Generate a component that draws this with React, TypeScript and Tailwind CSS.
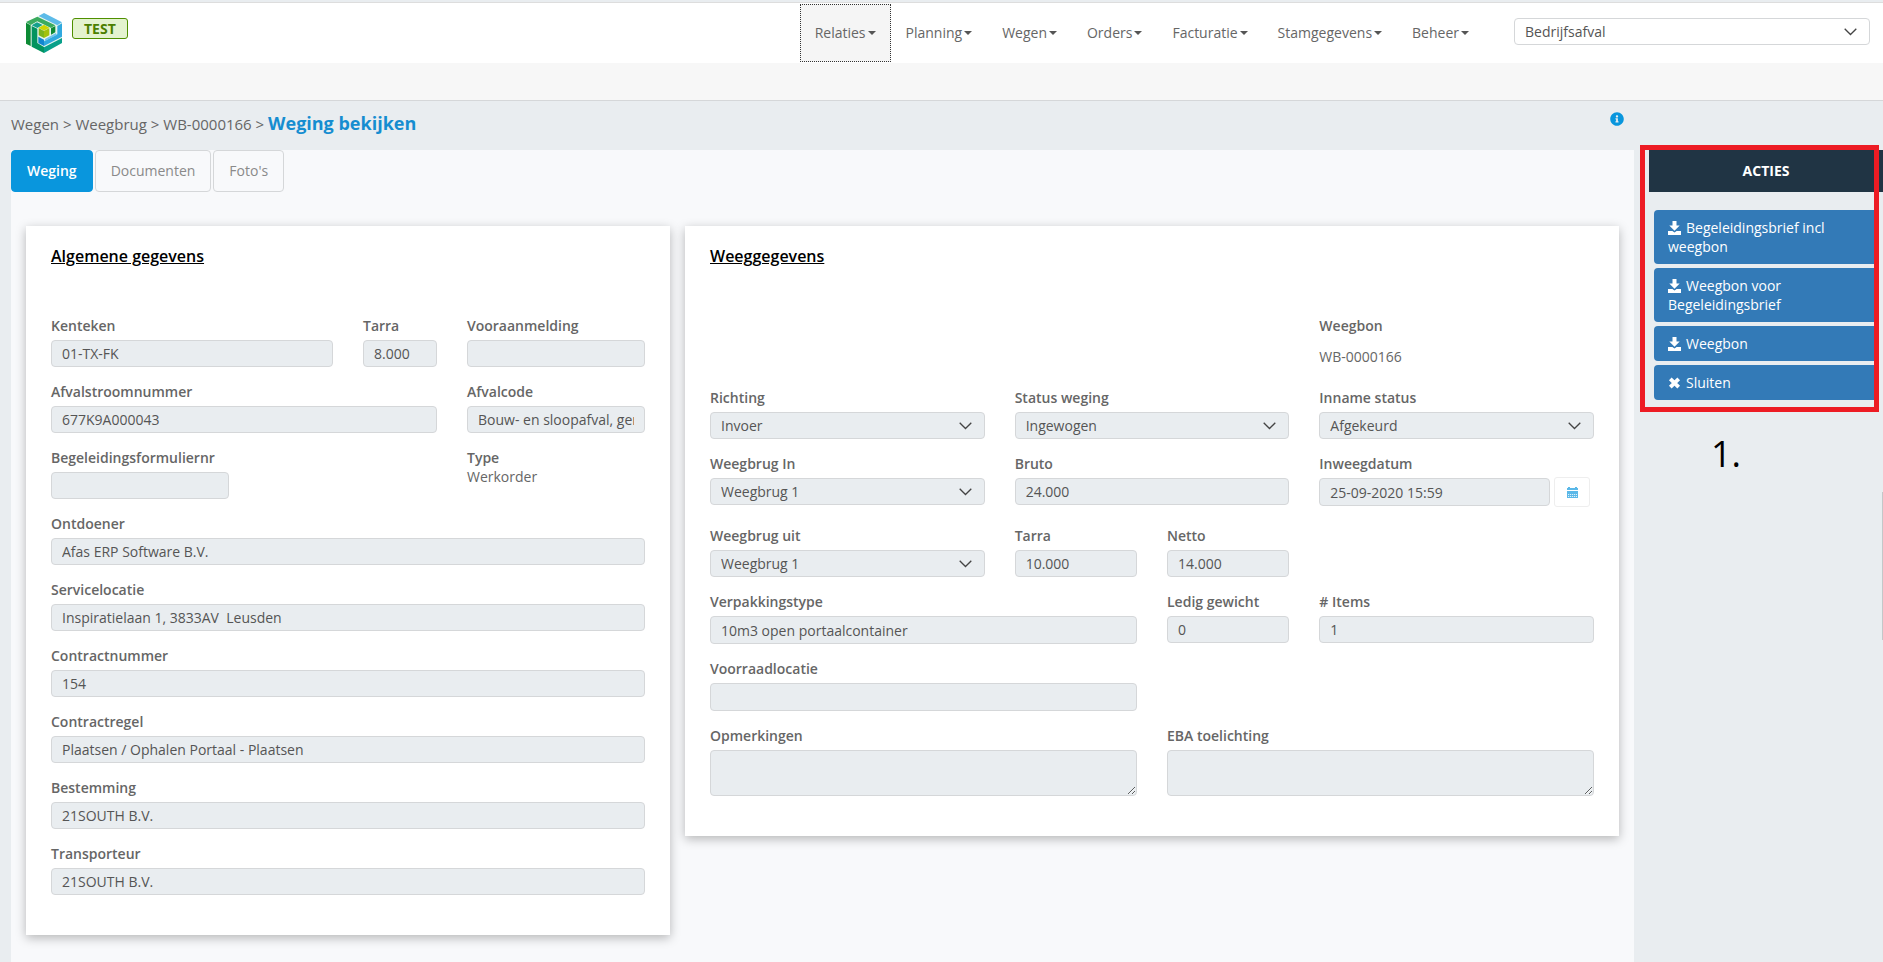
import React, { useState } from 'react';
import { FaInfoCircle } from 'react-icons/fa';

const menuItems = ['Relaties', 'Planning', 'Wegen', 'Orders', 'Facturatie', 'Stamgegevens', 'Beheer'];
const tabs = ['Weging', 'Documenten', "Foto's"];

const inputClass =
  'block w-full rounded border border-[#d5d7d9] bg-[#e9edf0] px-[10px] text-sm text-[#555555] outline-none';

function Logo() {
  return (
    <svg width="36" height="40" viewBox="0 0 108 120" aria-hidden="true">
      <polygon points="54,0 108,29 108,90 54,120 0,92 0,29" fill="#e8f5ee" />
      <polygon points="38,9 54,0 108,28 94,37" fill="#5dbbe9" />
      <polygon points="0,27 34,11 88,37 75,45 34,25 14,36" fill="#3bab5e" />
      <polygon points="0,29 14,37 14,99 0,92" fill="#0d8a35" />
      <polygon points="75,46 88,39 88,58 75,65" fill="#0d8a35" />
      <polygon points="17,37 33,28 50,36 34,45" fill="#14a08c" />
      <polygon points="17,39 34,47 34,90 54,102 54,120 17,101" fill="#02935f" />
      <polygon points="94,39 108,31 108,71 54,99 54,85 94,64" fill="#30a9df" />
      <polygon points="54,103 108,75 108,90 54,120" fill="#08a08a" />
      <polygon points="37,71 54,80 54,99 37,90" fill="#1286cf" />
      <polygon points="57,78 90,60 92,66 56,85" fill="#6fc3ec" />
      <polygon points="54,35 70,44 54,53 38,44" fill="#cdd500" />
      <polygon points="38,45 54,54 54,75 38,67" fill="#7db51c" />
      <polygon points="70,45 54,54 54,75 70,67" fill="#a2c10c" />
    </svg>
  );
}

function DownloadIcon() {
  return (
    <svg className="mr-[5px] inline-block align-[-2px]" width="13" height="14" viewBox="0 0 13 14" fill="currentColor" aria-hidden="true">
      <path d="M4.5 0h4v4.5h3.2L6.5 9.7 1.3 4.5h3.2zM0 10h4.4l2.1 1.4L8.600 10H13v4H0z" />
    </svg>
  );
}

function CloseIcon() {
  return (
    <svg className="mr-[5px] inline-block align-[-1px]" width="13" height="12" viewBox="0 0 13 12" aria-hidden="true">
      <path d="M2.300 1.800l8.400 8.400M10.700 1.800l-8.400 8.400" stroke="currentColor" strokeWidth="3.800" />
    </svg>
  );
}

function CalendarIcon() {
  return (
    <svg width="11" height="11" viewBox="0 0 11 11" aria-hidden="true">
      <path d="M0 1h1V0h2v1h5V0h2v1h1v2H0zM0 4h11v7H0z" fill="#5bb8e8" />
      <path d="M1 7.500h9M1 9.500h9" stroke="#ffffff" strokeWidth="0.800" strokeDasharray="1.200 0.800" />
    </svg>
  );
}

function Select({ id, value }: { id: string; value: string }) {
  return (
    <div className="relative">
      <select id={id} defaultValue={value} className={`${inputClass} h-[27px] appearance-none`}>
        <option>{value}</option>
      </select>
      <Chevron />
    </div>
  );
}

function Chevron() {
  return (
    <svg
      className="pointer-events-none absolute top-[10px] right-[13px]"
      width="13"
      height="8"
      viewBox="0 0 13 8"
      fill="none"
      stroke="#444444"
      strokeWidth="1.300"
      aria-hidden="true"
    >
      <path d="M0.700 0.700l5.800 5.800 5.800-5.800" />
    </svg>
  );
}

interface FieldProps {
  id: string;
  label: string;
  value?: string;
  span: string;
  type?: 'input' | 'select' | 'textarea';
  height?: string;
}

function Field({ id, label, value = '', span, type = 'input', height = 'h-[27px]' }: FieldProps) {
  return (
    <div className={`${span} pb-[15px]`}>
      <label htmlFor={id} className="mb-[5px] block font-semibold">
        {label}
      </label>
      {type === 'select' && <Select id={id} value={value} />}
      {type === 'input' && <input id={id} type="text" defaultValue={value} readOnly className={`${inputClass} ${height}`} />}
      {type === 'textarea' && <textarea id={id} defaultValue={value} readOnly className={`${inputClass} h-[46px] resize`} />}
    </div>
  );
}

function Card({ title, children }: { title: string; children: React.ReactNode }) {
  return (
    <section className="bg-white px-[25px] pt-[19px] pb-[25px] shadow-[0_3px_10px_rgba(0,0,0,0.27)]">
      <h2 className="mb-[49px] text-base leading-[22px] font-semibold text-black underline">{title}</h2>
      <div className="grid grid-cols-12 gap-x-[30px] leading-[19px]">{children}</div>
    </section>
  );
}

export default function App() {
  const [activeTab, setActiveTab] = useState('Weging');
  const [company, setCompany] = useState('Bedrijfsafval');

  return (
    <div className="flex min-h-screen flex-col bg-[#e9edf0] font-['Open_Sans',sans-serif] text-sm text-[#666666]">
      <header className="flex h-[63px] items-start border-t border-[#dddddd] bg-white mt-[2px] -mb-[2px] pr-[13px] pl-[26px]">
        <a href="#" className="mt-[10px]" aria-label="Home">
          <Logo />
        </a>
        <span className="mt-[15px] ml-[10px] rounded-[3px] border border-[#4f8f00] bg-[#e4f3cf] px-[11px] leading-[19px] font-bold text-[#4c7f00]">
          TEST
        </span>
        <nav className="mt-px ml-auto flex">
          {menuItems.map((item, i) => (
            <button
              key={item}
              type="button"
              className={`flex h-[58px] items-center px-[14px] border ${
                i === 0 ? 'border-dotted border-[#333333] bg-[#f5f5f5]' : 'border-transparent'
              }`}
            >
              {item}
              <span className="ml-[2px] border-x-4 border-t-4 border-x-transparent border-t-[#555555]" />
            </button>
          ))}
        </nav>
        <div className="relative mt-[15px] ml-[30px] w-[356px]">
          <select
            aria-label="Bedrijf"
            value={company}
            onChange={(e) => setCompany(e.target.value)}
            className="h-[27px] w-full appearance-none rounded border border-[#d5d7d9] bg-white px-[10px] text-sm text-[#555555]"
          >
            <option>Bedrijfsafval</option>
          </select>
          <Chevron />
        </div>
      </header>
      <div className="h-[38px] border-b border-[#d5d7d9] bg-[#f7f7f7]" />

      <div className="flex flex-1 pl-[11px]">
        <main className="flex flex-1 flex-col">
          <div className="flex h-[49px] items-start justify-between pt-[10px] pr-[10px]">
            <h1 className="text-[15px] leading-6">
              <a href="#">Wegen</a> &gt; <a href="#">Weegbrug</a> &gt; <a href="#">WB-0000166</a> &gt;{' '}
              <span className="text-lg leading-6 font-bold text-[#168dd0]">Weging bekijken</span>
            </h1>
            <button type="button" aria-label="Informatie" className="mt-px text-[#0996dd]">
              <FaInfoCircle size={14} />
            </button>
          </div>

          <div className="flex-1 bg-[#f8f9fb]">
            <div className="flex gap-[2px]">
              {tabs.map((tab) => (
                <button
                  key={tab}
                  type="button"
                  onClick={() => setActiveTab(tab)}
                  className={`h-[42px] rounded border px-[15px] ${
                    tab === activeTab
                      ? 'border-[#0996dd] bg-[#0996dd] font-semibold text-white'
                      : 'border-[#d5d7d9] text-[#8a8a8a]'
                  }`}
                >
                  {tab}
                </button>
              ))}
            </div>

            <div className="grid grid-cols-[644fr_934fr] items-start gap-[15px] px-[15px] pt-[34px] pb-[27px]">
              <Card title="Algemene gegevens">
                <Field id="kenteken" label="Kenteken" value="01-TX-FK" span="col-span-6" />
                <Field id="tarra" label="Tarra" value="8.000" span="col-span-2" />
                <Field id="vooraanmelding" label="Vooraanmelding" span="col-span-4" />
                <Field id="afvalstroom" label="Afvalstroomnummer" value="677K9A000043" span="col-span-8" />
                <Field id="afvalcode" label="Afvalcode" value="Bouw- en sloopafval, gemengd" span="col-span-4" />
                <Field id="formuliernr" label="Begeleidingsformuliernr" span="col-span-4" />
                <div className="col-span-4 col-start-9">
                  <div className="font-semibold">Type</div>
                  <div>Werkorder</div>
                </div>
                <Field id="ontdoener" label="Ontdoener" value="Afas ERP Software B.V." span="col-span-12" />
                <Field id="servicelocatie" label="Servicelocatie" value={'Inspiratielaan 1, 3833AV  Leusden'} span="col-span-12" />
                <Field id="contractnummer" label="Contractnummer" value="154" span="col-span-12" />
                <Field id="contractregel" label="Contractregel" value="Plaatsen / Ophalen Portaal - Plaatsen" span="col-span-12" />
                <Field id="bestemming" label="Bestemming" value="21SOUTH B.V." span="col-span-12" />
                <Field id="transporteur" label="Transporteur" value="21SOUTH B.V." span="col-span-12" />
              </Card>

              <Card title="Weeggegevens">
                <div className="col-span-4 col-start-9 pb-[22px]">
                  <div className="mb-3 font-semibold">Weegbon</div>
                  <div>WB-0000166</div>
                </div>
                <Field id="richting" label="Richting" value="Invoer" type="select" span="col-span-4" />
                <Field id="status" label="Status weging" value="Ingewogen" type="select" span="col-span-4" />
                <Field id="inname" label="Inname status" value="Afgekeurd" type="select" span="col-span-4" />
                <Field id="brug-in" label="Weegbrug In" value="Weegbrug 1" type="select" span="col-span-4" />
                <Field id="bruto" label="Bruto" value="24.000" span="col-span-4" />
                <div className="col-span-4 pb-5">
                  <label htmlFor="inweegdatum" className="mb-[5px] block font-semibold">
                    Inweegdatum
                  </label>
                  <div className="flex items-center gap-1 pr-1">
                    <input id="inweegdatum" type="text" defaultValue="25-09-2020 15:59" readOnly className={`${inputClass} h-[28px]`} />
                    <button
                      type="button"
                      aria-label="Kies datum"
                      className="-my-px flex h-[30px] w-9 shrink-0 items-center justify-center rounded-[3px] border border-[#eeeeee] bg-white"
                    >
                      <CalendarIcon />
                    </button>
                  </div>
                </div>
                <Field id="brug-uit" label="Weegbrug uit" value="Weegbrug 1" type="select" span="col-span-4" />
                <Field id="tarra-uit" label="Tarra" value="10.000" span="col-span-2" />
                <Field id="netto" label="Netto" value="14.000" span="col-span-2" />
                <Field id="verpakking" label="Verpakkingstype" value="10m3 open portaalcontainer" span="col-span-6 col-start-1" height="h-[28px]" />
                <Field id="ledig" label="Ledig gewicht" value="0" span="col-span-2" />
                <Field id="items" label="# Items" value="1" span="col-span-4" />
                <Field id="voorraad" label="Voorraadlocatie" span="col-span-6" height="h-[28px]" />
                <Field id="opmerkingen" label="Opmerkingen" type="textarea" span="col-span-6 col-start-1" />
                <Field id="toelichting" label="EBA toelichting" type="textarea" span="col-span-6" />
              </Card>
            </div>
          </div>
        </main>

        <aside className="w-[249px] shrink-0 pt-[49px]">
          <div className="relative">
            <h2 className="ml-[15px] bg-[#203444] text-center leading-[42px] font-bold text-white">ACTIES</h2>
            <div className="mt-[18px] mr-[9px] ml-5 flex flex-col gap-1">
              {['Begeleidingsbrief incl weegbon', 'Weegbon voor Begeleidingsbrief', 'Weegbon'].map((action) => (
                <button
                  key={action}
                  type="button"
                  className="rounded-l bg-[#337ab7] py-2 pr-10 pl-[14px] text-left leading-[19px] text-white"
                >
                  <DownloadIcon />
                  {action}
                </button>
              ))}
              <button type="button" className="rounded-l bg-[#337ab7] px-[14px] py-2 text-left leading-[19px] text-white">
                <CloseIcon />
                Sluiten
              </button>
            </div>
            <div className="pointer-events-none absolute -top-[5px] right-1 -bottom-3 left-[6px] border-[5px] border-[#ed1c24]" />
          </div>
          <p className="mt-[34px] ml-[77px] text-4xl text-black">1.</p>
        </aside>
      </div>

      <div className="absolute top-[492px] right-0 h-[148px] w-px bg-[#c4c7c9]" />
    </div>
  );
}
